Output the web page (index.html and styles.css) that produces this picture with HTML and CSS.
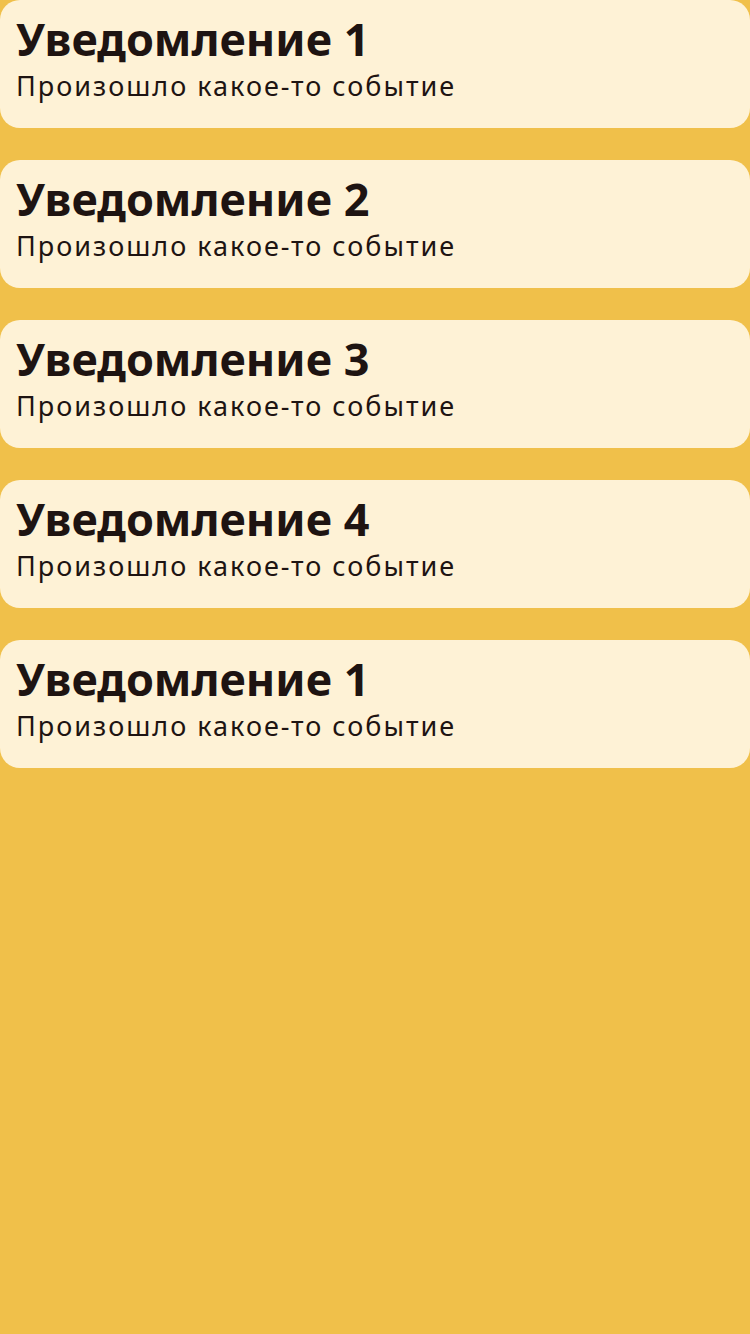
FILE: index.html
```html
<!DOCTYPE html>
<html lang="ru">
<head>
<meta charset="utf-8">
<link rel="stylesheet" href="styles.css">
</head>
<body>
<div class="list">
  <div class="card"><div class="title">Уведомление 1</div><div class="text">Произошло какое-то событие</div></div>
  <div class="card"><div class="title">Уведомление 2</div><div class="text">Произошло какое-то событие</div></div>
  <div class="card"><div class="title">Уведомление 3</div><div class="text">Произошло какое-то событие</div></div>
  <div class="card"><div class="title">Уведомление 4</div><div class="text">Произошло какое-то событие</div></div>
  <div class="card"><div class="title">Уведомление 1</div><div class="text">Произошло какое-то событие</div></div>
</div>
</body>
</html>
```
FILE: styles.css
```css
html, body {
  margin: 0;
  padding: 0;
  background: #f0c04a;
  width: 750px;
  height: 1334px;
}
body {
  font-family: "Noto Sans", sans-serif;
  color: #1e1412;
}
.list {
  display: flex;
  flex-direction: column;
  gap: 32px;
}
.card {
  box-sizing: border-box;
  height: 128px;
  background: #fef2d6;
  border-radius: 20px;
  padding: 10px 16px 0;
  display: flex;
  flex-direction: column;
}
.title {
  font-size: 45px;
  font-weight: 700;
  line-height: 57px;
}
.text {
  font-size: 27px;
  line-height: 38px;
  letter-spacing: 2px;
}
```
